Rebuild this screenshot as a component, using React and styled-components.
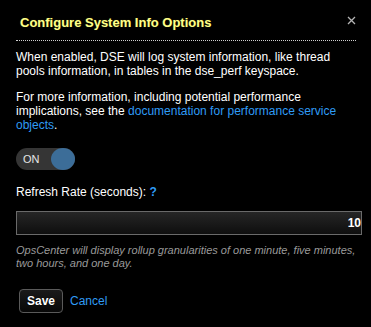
import React from "react";
import styled, { createGlobalStyle } from "styled-components";

const Global = createGlobalStyle`
  html, body { margin: 0; padding: 0; background: #000; }
  body { font-family: "Liberation Sans", Arial, sans-serif; color: #fff; }
`;

const Dialog = styled.div`
  width: 371px;
  height: 327px;
  box-sizing: border-box;
  background: #000;
  padding: 0 9px 0 16px;
  display: flex;
  flex-direction: column;
`;

const Header = styled.div`
  display: flex;
  align-items: center;
  justify-content: space-between;
  height: 41px;
  margin-right: 6px;
  padding-left: 4px;
  box-sizing: border-box;
  border-bottom: 1px dotted #cfcfcf;
`;

const Title = styled.h3`
  margin: 0;
  padding-top: 4px;
  font-size: 13px;
  font-weight: bold;
  color: #ffff8a;
  text-shadow: 0 0 1px rgba(80, 80, 0, 0.9);
`;

const Close = styled.button`
  background: none;
  border: 0;
  padding: 0;
  width: 9px;
  height: 9px;
  display: flex;
  cursor: pointer;
  margin-top: 1px;
`;

const Para = styled.p`
  margin: ${(p) => p.$top}px 0 0;
  font-size: 12px;
  line-height: 14px;
  color: #fff;
`;

const Link = styled.a`
  color: #2f9bf5;
  text-decoration: none;
`;

const Toggle = styled.div`
  margin-top: 16px;
  width: 59px;
  height: 22px;
  border-radius: 11px;
  background: #353535;
  display: flex;
  align-items: center;
  justify-content: space-between;
  padding-left: 7px;
  box-sizing: border-box;
`;

const ToggleLabel = styled.span`
  font-size: 11px;
  color: #e6e6e6;
`;

const Knob = styled.span`
  width: 24px;
  height: 22px;
  border-radius: 50%;
  background: #3c6d98;
`;

const Label = styled.label`
  margin-top: 15px;
  font-size: 12px;
  line-height: 14px;
  color: #fff;
`;

const Help = styled.span`
  color: #2f9bf5;
  font-weight: bold;
`;

const Input = styled.input`
  margin-top: 12px;
  width: 346px;
  height: 24px;
  box-sizing: border-box;
  border: 1px solid #6a6a6a;
  background: linear-gradient(#262626, #0e0e0e);
  color: #fff;
  font-family: "Liberation Sans", Arial, sans-serif;
  font-size: 12px;
  font-weight: bold;
  text-align: right;
  padding: 0 0 0 4px;
  outline: none;
`;

const Note = styled.p`
  margin: 9px 0 0;
  font-size: 11px;
  line-height: 12.5px;
  font-style: italic;
  color: #9a9a9a;
`;

const Actions = styled.div`
  margin-top: 20px;
  display: flex;
  align-items: center;
  gap: 7px;
  padding-left: 3px;
`;

const SaveButton = styled.button`
  width: 44px;
  height: 24px;
  border-radius: 4px;
  border: 1px solid #5a5a5a;
  background: linear-gradient(#1a1a1a, #080808);
  color: #fff;
  font-family: "Liberation Sans", Arial, sans-serif;
  font-size: 12px;
  font-weight: bold;
  padding: 0;
  text-shadow: 0 0 1px #000;
`;

const Cancel = styled.a`
  font-size: 12px;
  color: #2f9bf5;
  text-decoration: none;
`;

export default function App() {
  return (
    <>
      <Global />
      <Dialog>
        <Header>
          <Title>Configure System Info Options</Title>
          <Close aria-label="Close">
            <svg width="9" height="9" viewBox="0 0 9 9">
              <path d="M1 1L8 8M8 1L1 8" stroke="#b5b5b5" strokeWidth="1.3" />
            </svg>
          </Close>
        </Header>
        <Para $top={9}>
          When enabled, DSE will log system information, like thread pools
          information, in tables in the dse_perf keyspace.
        </Para>
        <Para $top={12}>
          For more information, including potential performance implications,
          see the <Link href="#">documentation for performance service objects</Link>.
        </Para>
        <Toggle>
          <ToggleLabel>ON</ToggleLabel>
          <Knob />
        </Toggle>
        <Label>
          Refresh Rate (seconds): <Help>?</Help>
        </Label>
        <Input defaultValue="10" />
        <Note>
          OpsCenter will display rollup granularities of one minute, five
          minutes, two hours, and one day.
        </Note>
        <Actions>
          <SaveButton>Save</SaveButton>
          <Cancel href="#">Cancel</Cancel>
        </Actions>
      </Dialog>
    </>
  );
}
